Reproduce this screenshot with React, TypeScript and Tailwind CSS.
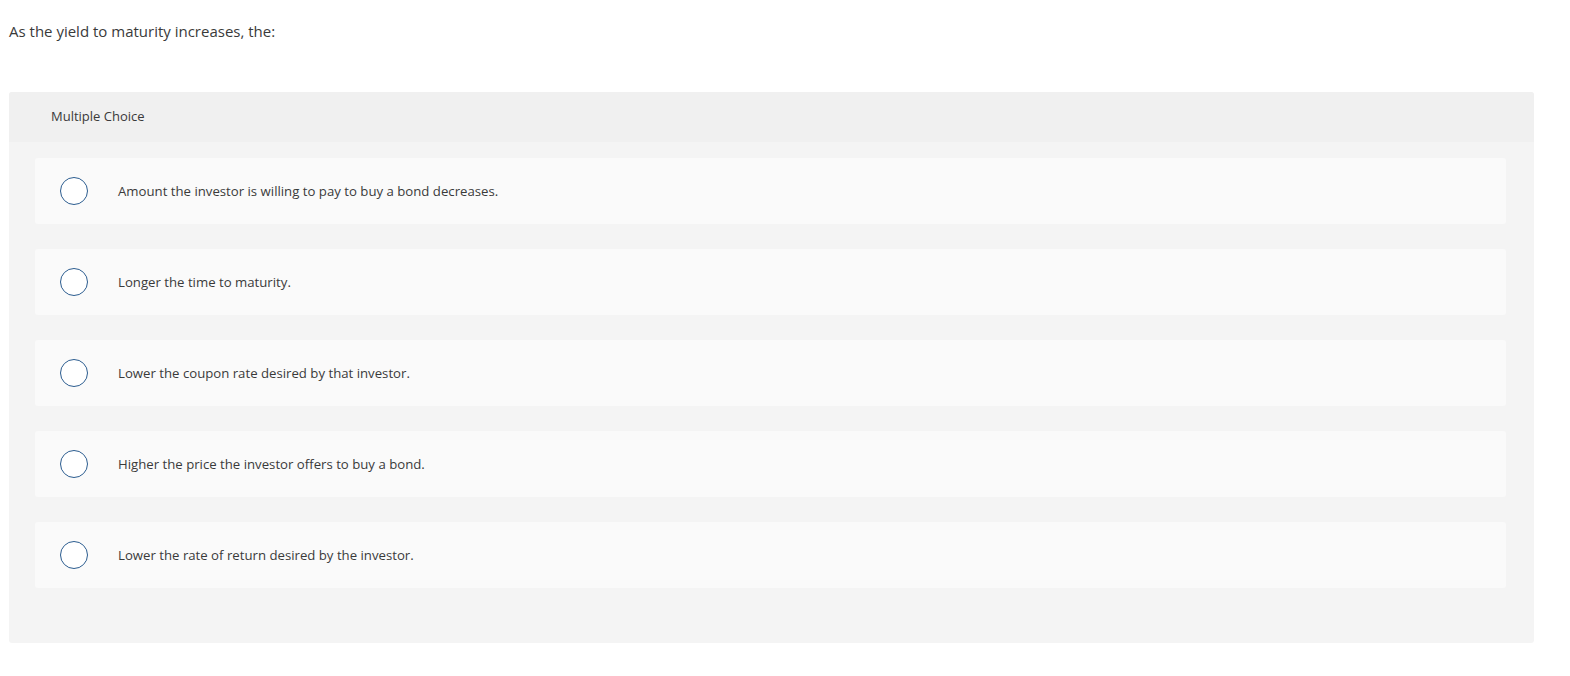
const options = [
  "Amount the investor is willing to pay to buy a bond decreases.",
  "Longer the time to maturity.",
  "Lower the coupon rate desired by that investor.",
  "Higher the price the investor offers to buy a bond.",
  "Lower the rate of return desired by the investor.",
];

export default function App() {
  return (
    <div className="min-h-[676px] bg-white text-[#333] font-['Open_Sans',Arial,sans-serif]">
      <p className="pl-[9px] pt-[22px] text-[15px] leading-[18px] text-[#3a3a3a]">
        As the yield to maturity increases, the:
      </p>

      <div className="mt-[52px] ml-[9px] w-[1525px] rounded-[3px] bg-[#f4f4f4]">
        <div className="flex h-[50px] items-center rounded-t-[3px] bg-[#f0f0f0] pl-[42px] text-[13px] text-[#3a3a3a]">
          Multiple Choice
        </div>

        <div className="flex flex-col gap-[25px] pl-[26px] pr-[28px] pt-[16px] pb-[55px]">
          {options.map((text) => (
            <label
              key={text}
              className="flex h-[66px] cursor-pointer items-center rounded-[3px] bg-[#fafafa]"
            >
              <span className="ml-[25px] h-[28px] w-[28px] shrink-0 rounded-full border-[1.5px] border-[#2b5c8f] bg-white" />
              <span className="ml-[30px] pt-[2px] text-[13.2px] text-[#3a3a3a]">{text}</span>
            </label>
          ))}
        </div>
      </div>
    </div>
  );
}
